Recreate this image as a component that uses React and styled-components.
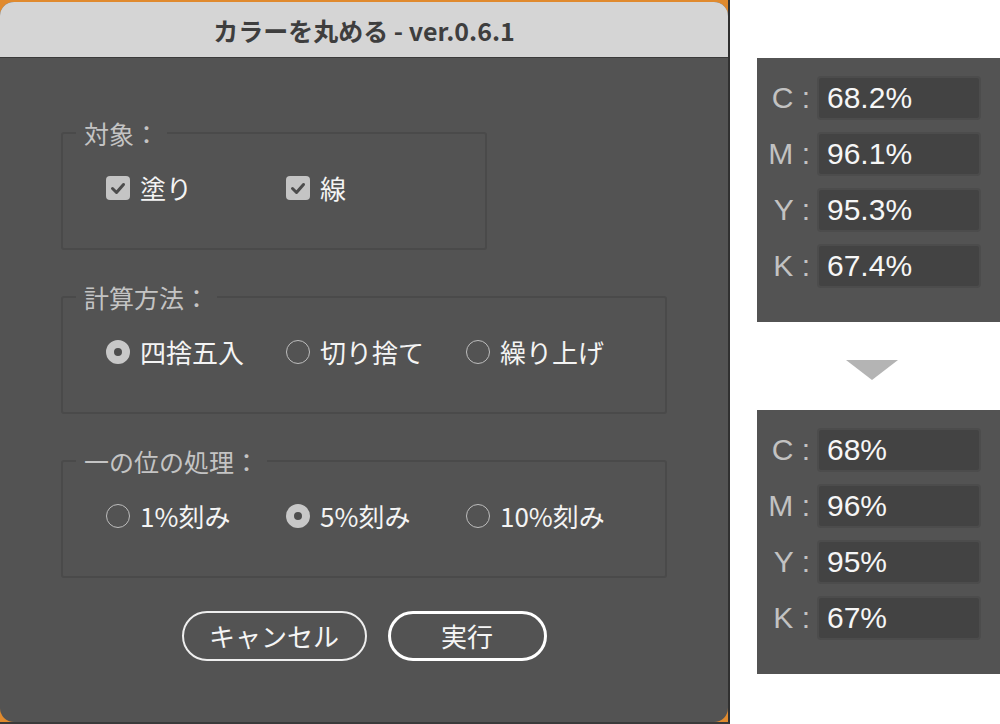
import React from 'react';
import styled, { createGlobalStyle } from 'styled-components';

const GlobalStyle = createGlobalStyle`
  html, body {
    margin: 0;
    padding: 0;
    background: #ffffff;
  }
  body {
    font-family: "Noto Sans CJK JP", "Noto Sans", sans-serif;
  }
`;

const Page = styled.div`
  display: flex;
  width: 1000px;
  height: 724px;
  overflow: hidden;
`;

const Backdrop = styled.div`
  width: 728px;
  height: 720px;
  padding-top: 2px;
  background: #e08a2e;
  border-right: 2px solid #303030;
  border-bottom: 2px solid #3a3a3a;
`;

const Dialog = styled.div`
  width: 728px;
  height: 720px;
  border-radius: 14px;
  overflow: hidden;
  background: #535353;
  display: flex;
  flex-direction: column;
`;

const TitleBar = styled.div`
  height: 55px;
  flex: none;
  background: #d5d5d5;
  border-bottom: 1px solid #3a3a3a;
  display: flex;
  align-items: center;
  justify-content: center;
  color: #3e3e3e;
  font-size: 25px;
  font-weight: 700;
`;

const Body = styled.div`
  padding: 61px 0 0 61px;
  display: flex;
  flex-direction: column;
  gap: 33px;
`;

const Group = styled.fieldset`
  margin: 0;
  min-width: 0;
  width: ${p => p.$width}px;
  box-sizing: border-box;
  border: 2px solid #4a4a4a;
  border-radius: 3px;
  padding: 27px 0 46px 43px;
`;

const Legend = styled.legend`
  margin-left: -30px;
  padding: 0 8px;
  height: 28px;
  line-height: 28px;
  font-size: 25px;
  color: #c4c4c4;
`;

const Options = styled.div`
  display: flex;
  height: 28px;
  align-items: center;
`;

const Option = styled.label`
  width: 180px;
  flex: none;
  display: flex;
  align-items: center;
  gap: 10px;
  font-size: 26px;
  line-height: 28px;
  color: #f4f4f4;
`;

const CheckBox = styled.span`
  width: 24px;
  height: 24px;
  flex: none;
  border-radius: 4px;
  background: #c4c4c4;
  display: flex;
  align-items: center;
  justify-content: center;
`;

const Radio = styled.span`
  width: 24px;
  height: 24px;
  flex: none;
  box-sizing: border-box;
  border-radius: 50%;
  border: ${p => (p.$on ? '8px solid #c8c8c8' : '1.5px solid #bdbdbd')};
  background: ${p => (p.$on ? '#4e4e4e' : 'transparent')};
`;

const Buttons = styled.div`
  display: flex;
  justify-content: center;
  gap: 21px;
  margin-left: -61px;
`;

const Button = styled.button`
  height: 50px;
  width: ${p => p.$width}px;
  box-sizing: border-box;
  border-radius: 25px;
  background: transparent;
  border: ${p => (p.$primary ? '3px solid #ffffff' : '2px solid #eeeeee')};
  color: #f5f5f5;
  font-family: "Noto Sans CJK JP", sans-serif;
  font-size: 26px;
  line-height: 1;
  padding: 0;
`;

const Side = styled.div`
  flex: 1;
  padding: 58px 0 0 27px;
  display: flex;
  flex-direction: column;
`;

const Panel = styled.div`
  width: 243px;
  height: 264px;
  box-sizing: border-box;
  background: #535353;
  padding-top: 18px;
  display: flex;
  flex-direction: column;
  gap: 12px;
`;

const Row = styled.div`
  display: flex;
  align-items: center;
  gap: 7px;
  font-family: "Liberation Sans", Arial, sans-serif;
`;

const Channel = styled.span`
  width: 53px;
  text-align: right;
  font-size: 30px;
  color: #c2c2c2;
`;

const Field = styled.span`
  width: 164px;
  height: 44px;
  box-sizing: border-box;
  border: 2px solid #4c4c4c;
  border-radius: 4px;
  background: #434343;
  padding-left: 8px;
  display: flex;
  align-items: center;
  font-size: 30px;
  color: #f6f6f6;
`;

const Arrow = styled.div`
  width: 0;
  height: 0;
  margin: 38px 0 30px 89px;
  border-left: 26px solid transparent;
  border-right: 26px solid transparent;
  border-top: 20px solid #b4b4b4;
`;

function Check() {
  return (
    <CheckBox>
      <svg width="24" height="24" viewBox="0 0 24 24">
        <path d="M6.5 12.5 L10.5 16.5 L17.5 8.5" fill="none" stroke="#4c4c4c" strokeWidth="3" strokeLinecap="round" strokeLinejoin="round" />
      </svg>
    </CheckBox>
  );
}

function CmykPanel({ values }) {
  return (
    <Panel>
      {['C', 'M', 'Y', 'K'].map((c, i) => (
        <Row key={c}>
          <Channel>{c} :</Channel>
          <Field>{values[i]}</Field>
        </Row>
      ))}
    </Panel>
  );
}

export default function App() {
  return (
    <Page>
      <GlobalStyle />
      <Backdrop>
        <Dialog>
          <TitleBar>カラーを丸める - ver.0.6.1</TitleBar>
          <Body>
            <Group $width={426}>
              <Legend>対象：</Legend>
              <Options>
                <Option><Check />塗り</Option>
                <Option><Check />線</Option>
              </Options>
            </Group>
            <Group $width={606}>
              <Legend>計算方法：</Legend>
              <Options>
                <Option><Radio $on />四捨五入</Option>
                <Option><Radio />切り捨て</Option>
                <Option><Radio />繰り上げ</Option>
              </Options>
            </Group>
            <Group $width={606}>
              <Legend>一の位の処理：</Legend>
              <Options>
                <Option><Radio />1%刻み</Option>
                <Option><Radio $on />5%刻み</Option>
                <Option><Radio />10%刻み</Option>
              </Options>
            </Group>
            <Buttons>
              <Button $width={185}>キャンセル</Button>
              <Button $width={159} $primary>実行</Button>
            </Buttons>
          </Body>
        </Dialog>
      </Backdrop>
      <Side>
        <CmykPanel values={['68.2%', '96.1%', '95.3%', '67.4%']} />
        <Arrow />
        <CmykPanel values={['68%', '96%', '95%', '67%']} />
      </Side>
    </Page>
  );
}
